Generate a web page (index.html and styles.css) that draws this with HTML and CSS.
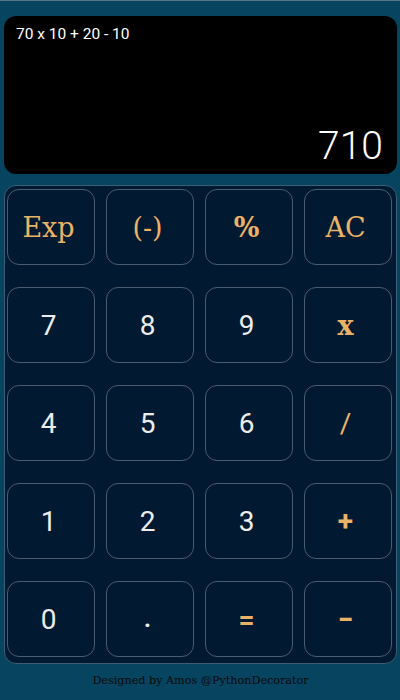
FILE: index.html
```html
<!DOCTYPE html>
<html>
<head>
<meta charset="utf-8">
<link rel="stylesheet" href="styles.css">
</head>
<body>
<div class="app">
  <div class="display">
    <div class="expr">70 x 10 + 20 - 10</div>
    <div class="result">710</div>
  </div>
  <div class="keypad">
    <button class="key op slab">Exp</button>
    <button class="key op slab">(-)</button>
    <button class="key op slab bold">%</button>
    <button class="key op slab">AC</button>
    <button class="key">7</button>
    <button class="key">8</button>
    <button class="key">9</button>
    <button class="key op slab bold">x</button>
    <button class="key">4</button>
    <button class="key">5</button>
    <button class="key">6</button>
    <button class="key op">/</button>
    <button class="key">1</button>
    <button class="key">2</button>
    <button class="key">3</button>
    <button class="key op bold">+</button>
    <button class="key">0</button>
    <button class="key dot">.</button>
    <button class="key op bold">=</button>
    <button class="key op bold">−</button>
  </div>
  <div class="footer">Designed by Amos @PythonDecorator</div>
</div>
</body>
</html>
```
FILE: styles.css
```css
html, body {
  margin: 0;
  padding: 0;
  background: #06445f;
}
.app {
  width: 400px;
  height: 700px;
  box-sizing: border-box;
  border-top: 1px solid #5a7686;
  padding: 15px 3px 0 4px;
  display: flex;
  flex-direction: column;
}
.display {
  height: 158px;
  background: #000;
  border-radius: 12px;
  box-sizing: border-box;
  padding: 8px 14px 6px 12px;
  display: flex;
  flex-direction: column;
  justify-content: space-between;
  font-family: Roboto, "Liberation Sans", sans-serif;
  color: #fff;
}
.expr {
  font-size: 15.5px;
  line-height: 21px;
}
.result {
  text-align: right;
  font-size: 39px;
  line-height: 44px;
  font-weight: 300;
}
.keypad {
  margin-top: 11px;
  height: 479px;
  box-sizing: border-box;
  background: #021a31;
  border: 1px solid #3c5d74;
  border-radius: 12px;
  padding: 3px 2px 4px 2px;
  display: grid;
  grid-template-columns: repeat(4, 88px);
  grid-template-rows: repeat(5, 76px);
  column-gap: 11px;
  row-gap: 22px;
}
.key {
  background: transparent;
  border: 1px solid #4a5c6e;
  border-radius: 12px;
  color: #ececec;
  font-family: Roboto, "Liberation Sans", sans-serif;
  font-size: 28px;
  padding: 0 5px 0 0;
  margin: 0;
  display: flex;
  align-items: center;
  justify-content: center;
}
.op {
  color: #eab266;
}
.slab {
  font-family: "DejaVu Serif", serif;
  font-size: 27px;
}
.bold {
  font-weight: bold;
}
.dot {
  font-weight: bold;
  font-size: 24px;
}
.footer {
  flex: 1;
  display: flex;
  align-items: center;
  justify-content: center;
  font-family: "DejaVu Serif", serif;
  font-size: 11.2px;
  color: #0a0a0a;
  padding-bottom: 4px;
}
```
